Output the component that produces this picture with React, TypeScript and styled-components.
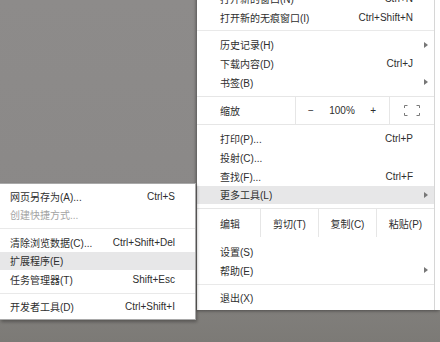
import React from 'react';
import styled, { createGlobalStyle } from 'styled-components';

const GlobalStyle = createGlobalStyle`
  html, body {
    margin: 0;
    padding: 0;
    width: 440px;
    height: 342px;
    overflow: hidden;
  }
  body {
    font-family: "Liberation Sans", "Noto Sans CJK SC", sans-serif;
  }
`;

// Blurry grey page behind the menus
const Desktop = styled.div`
  position: relative;
  width: 440px;
  height: 342px;
  overflow: hidden;
  background: linear-gradient(180deg, #8d8b8a 0%, #8a8887 70%, #7c7a76 100%);
  font-size: 10px;
  color: #2e2e2e;
`;

// Chrome's main menu, cut off at the top of the window
const MainMenu = styled.div`
  position: absolute;
  left: 197px;
  top: -14px;
  width: 243px;
  display: flex;
  background: #fff;
  box-shadow: -1px 1px 3px rgba(0, 0, 0, 0.4);
  --row-h: 18.7px;
  --pad-l: 23px;
  --pad-r: 6px;
`;

const MenuBody = styled.div`
  width: 237px;
  padding: 3px 0;
  border-right: 1px solid #d6d6d6;
`;

// "More tools" flyout
const SubMenu = styled.div`
  position: absolute;
  left: 0;
  top: 183px;
  width: 195px;
  padding: 3px 0;
  background: #fff;
  border: 1px solid #a9a9a9;
  border-left: none;
  box-shadow: 1px 2px 3px rgba(0, 0, 0, 0.3);
  --row-h: 18.5px;
  --pad-l: 10px;
  --pad-r: 20px;
`;

const Row = styled.div<{ $active?: boolean; $disabled?: boolean }>`
  display: flex;
  align-items: center;
  height: var(--row-h);
  padding: 0 var(--pad-r) 0 var(--pad-l);
  background: ${(p) => (p.$active ? '#e7e7e8' : 'transparent')};
  color: ${(p) => (p.$disabled ? '#a3a3a3' : 'inherit')};
  white-space: nowrap;
`;

const Label = styled.span`
  flex: 1;
`;

const Shortcut = styled.span``;

const ArrowSlot = styled.span`
  width: 15px;
  display: flex;
  justify-content: flex-end;
`;

const Arrow = styled.span`
  width: 0;
  height: 0;
  border-left: 4px solid #777;
  border-top: 3px solid transparent;
  border-bottom: 3px solid transparent;
`;

const Separator = styled.div`
  height: 1px;
  margin: 4px 0;
  background: #e9e9e9;
`;

const ToolRow = styled.div<{ $last?: boolean }>`
  display: flex;
  align-items: stretch;
  height: ${(p) => (p.$last ? 28 : 27)}px;
  margin: ${(p) => (p.$last ? '4px 0 5px' : '5px 0 4px')};
  border-top: 1px solid #e6e6e6;
  border-bottom: ${(p) => (p.$last ? 'none' : '1px solid #e6e6e6')};
`;

const ToolLabel = styled.span`
  flex: 1;
  display: flex;
  align-items: center;
  padding-left: var(--pad-l);
`;

const ZoomControls = styled.div`
  box-sizing: border-box;
  width: 95px;
  display: flex;
  align-items: center;
  justify-content: space-between;
  padding: 0 13px 0 12px;
  border-left: 1px solid #e6e6e6;
  border-right: 1px solid #e6e6e6;
`;

const FullscreenCell = styled.div`
  width: 44px;
  display: flex;
  align-items: center;
  justify-content: center;
`;

const EditCell = styled.div`
  box-sizing: border-box;
  width: 58px;
  display: flex;
  align-items: center;
  justify-content: center;
  border-left: 1px solid #e6e6e6;
`;

type Item = {
  label: string;
  shortcut?: string;
  arrow?: boolean;
  active?: boolean;
  disabled?: boolean;
};

const MainItem: React.FC<Item> = ({ label, shortcut, arrow, active }) => (
  <Row $active={active}>
    <Label>{label}</Label>
    {shortcut && <Shortcut>{shortcut}</Shortcut>}
    <ArrowSlot>{arrow && <Arrow />}</ArrowSlot>
  </Row>
);

const SubItem: React.FC<Item> = ({ label, shortcut, active, disabled }) => (
  <Row $active={active} $disabled={disabled}>
    <Label>{label}</Label>
    {shortcut && <Shortcut>{shortcut}</Shortcut>}
  </Row>
);

const FullscreenIcon = () => (
  <svg width="16" height="11" viewBox="0 0 16 11" fill="none" stroke="#7a7a7a" strokeWidth="1">
    <path d="M0.5 3V0.5H3.5 M12.5 0.5H15.5V3 M15.5 8V10.5H12.5 M3.5 10.5H0.5V8" />
  </svg>
);

export default function App() {
  return (
    <>
      <GlobalStyle />
      <Desktop>
        <MainMenu>
          <MenuBody>
            <MainItem label="打开新的窗口(N)" shortcut="Ctrl+N" />
            <MainItem label="打开新的无痕窗口(I)" shortcut="Ctrl+Shift+N" />
            <Separator />
            <MainItem label="历史记录(H)" arrow />
            <MainItem label="下载内容(D)" shortcut="Ctrl+J" />
            <MainItem label="书签(B)" arrow />
            <ToolRow>
              <ToolLabel>缩放</ToolLabel>
              <ZoomControls>
                <span>−</span>
                <span>100%</span>
                <span>+</span>
              </ZoomControls>
              <FullscreenCell>
                <FullscreenIcon />
              </FullscreenCell>
            </ToolRow>
            <MainItem label="打印(P)..." shortcut="Ctrl+P" />
            <MainItem label="投射(C)..." />
            <MainItem label="查找(F)..." shortcut="Ctrl+F" />
            <MainItem label="更多工具(L)" arrow active />
            <ToolRow $last>
              <ToolLabel>编辑</ToolLabel>
              <EditCell>剪切(T)</EditCell>
              <EditCell>复制(C)</EditCell>
              <EditCell>粘贴(P)</EditCell>
            </ToolRow>
            <MainItem label="设置(S)" />
            <MainItem label="帮助(E)" arrow />
            <Separator />
            <MainItem label="退出(X)" />
          </MenuBody>
        </MainMenu>

        <SubMenu>
          <SubItem label="网页另存为(A)..." shortcut="Ctrl+S" />
          <SubItem label="创建快捷方式..." disabled />
          <Separator />
          <SubItem label="清除浏览数据(C)..." shortcut="Ctrl+Shift+Del" />
          <SubItem label="扩展程序(E)" active />
          <SubItem label="任务管理器(T)" shortcut="Shift+Esc" />
          <Separator />
          <SubItem label="开发者工具(D)" shortcut="Ctrl+Shift+I" />
        </SubMenu>
      </Desktop>
    </>
  );
}
